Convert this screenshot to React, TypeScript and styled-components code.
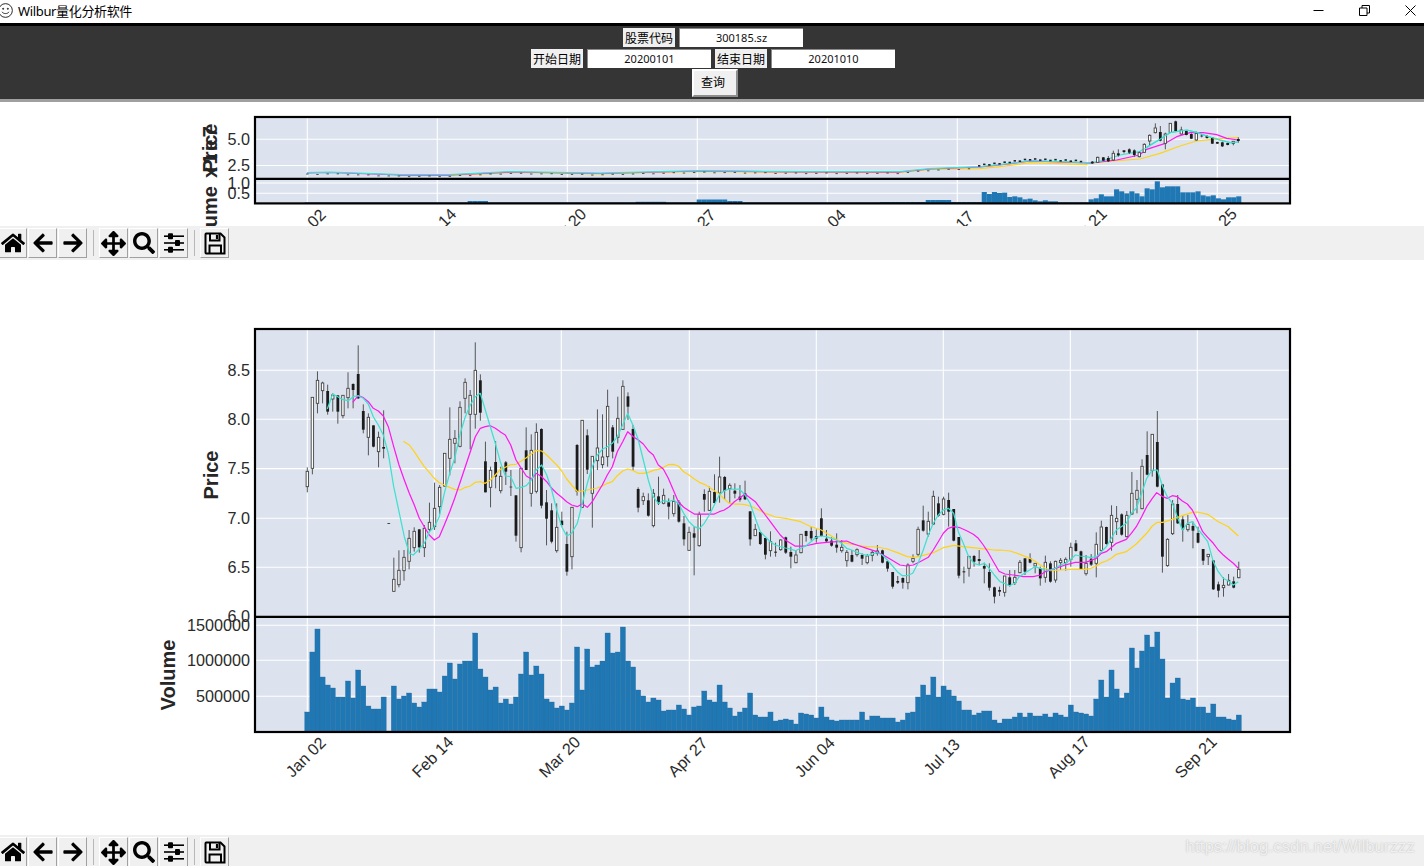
import React from "react";
import styled, { createGlobalStyle } from "styled-components";
import { FaHome, FaArrowLeft, FaArrowRight, FaArrowsAlt, FaSearch } from "react-icons/fa";

const GlobalStyle = createGlobalStyle`
  html, body { margin: 0; padding: 0; background: #fff; overflow: hidden; }
  #root { width: 1424px; height: 866px; }
`;

/* ---------- data, read off the reference ---------- */
type C = [number, number, number, number, number];
// wick top, body top, body bottom, wick bottom, filled — in 3x crop units
const A: C[] = [
[412,424,470,487,0],[202,202,415,433,0],[124,151,220,250,0],[155,159,182,220,0],[164,183,245,254,1],[190,195,207,245,0],[196,196,245,281,1],[196,196,257,265,0],[127,175,203,235,0],[160,162,180,235,1],[46,132,205,207,1],[223,243,299,310,1],[250,262,322,376,0],[286,286,350,352,1],[305,322,365,412,0],[241,351,356,385,1],[579,579,581,581,1],[683,748,784,785,0],[661,721,764,772,0],[660,682,722,752,0],[600,625,694,718,0],[592,604,653,665,0],[598,598,652,668,1],[585,595,653,681,0],[518,577,598,605,0],[458,535,590,600,0],[465,472,530,552,0],[370,370,468,470,0],[232,328,385,436,0],[300,325,340,400,0],[214,232,349,352,0],[145,157,205,250,0],[180,196,253,358,0],[37,121,253,296,0],[133,151,248,272,1],[335,394,487,487,1],[410,421,472,532,0],[333,396,440,475,1],[410,439,482,490,0],[393,397,425,465,1],
[420,470,472,498,1],[496,496,617,635,1],[415,415,653,667,0],[292,361,420,420,1],[313,361,490,530,0],[280,307,484,490,0],[295,297,527,535,1],[480,517,566,646,1],[520,541,635,640,1],[520,592,662,668,0],[545,572,585,590,1],[605,642,725,737,1],[532,532,680,718,0],[342,345,485,497,1],[271,271,532,534,0],[298,316,419,432,1],[379,379,490,593,0],[238,354,392,420,0],[253,381,404,415,0],[179,229,380,410,0],[285,292,365,385,1],[200,265,322,340,0],[151,169,298,300,0],[187,199,230,270,1],[285,297,410,422,1],[472,477,533,547,1],[488,500,512,525,0],[490,511,557,560,1],[477,490,587,592,0],[440,499,520,525,1],[476,496,520,523,0],[505,517,530,568,1],[495,514,551,560,0],[510,516,575,578,1],[558,580,628,647,1],[590,607,661,662,0],[590,610,623,736,1],[545,553,647,650,0],[478,492,509,545,1],[470,484,541,543,0],[433,486,519,520,1],[380,441,489,518,0],[438,441,483,510,1],[460,466,476,518,0],[460,482,491,505,1],[465,500,509,515,1],[452,490,508,510,1],[544,544,628,647,1],
];
const B: C[] = [
[372,388,407,408,0],[396,396,432,435,1],[414,414,464,478,1],[394,425,452,470,0],[428,455,458,470,1],[418,420,449,452,0],[410,412,458,462,1],[440,456,470,505,1],[450,465,488,490,0],[402,403,458,460,0],[392,393,408,425,1],[380,393,415,422,1],[388,408,416,428,1],[325,355,408,410,1],[390,416,424,428,1],[412,422,437,440,1],[400,434,443,458,1],[420,442,452,458,0],[450,457,482,500,0],[450,465,485,487,1],[445,449,464,470,0],[460,465,476,495,1],[462,468,488,493,0],[450,457,466,484,0],[435,453,460,467,0],[449,451,488,490,1],[482,484,506,515,1],[516,516,560,566,1],[528,543,548,552,1],[532,534,548,566,1],[490,495,548,568,0],[463,475,484,490,0],[380,388,463,470,0],[317,361,392,395,1],[335,364,402,410,0],[272,289,372,375,0],[290,310,347,350,1],[290,297,343,346,0],[278,300,335,380,1],[327,327,422,424,1],[411,411,527,535,1],[500,514,517,550,1],[468,469,505,530,0],[465,468,485,500,1],[450,477,483,496,1],[488,498,506,550,1],[490,516,563,572,1],[560,562,590,610,1],[560,570,575,588,1],[528,528,577,590,0],[510,532,555,560,1],
[510,532,548,555,0],[480,487,518,520,0],[475,475,515,525,1],[460,475,488,490,1],[490,490,498,520,0],[500,504,535,557,1],[467,487,532,548,0],[484,490,545,548,1],[482,484,540,548,0],[474,481,488,510,0],[472,478,488,512,0],[428,442,478,500,0],[420,430,453,455,1],[452,454,507,508,1],[465,490,521,527,0],[462,476,494,498,1],[397,433,490,532,0],[362,381,451,453,0],[380,381,432,434,1],[316,346,427,452,0],[318,355,365,405,0],[340,343,404,407,1],[333,346,410,412,0],[216,280,342,345,0],[240,271,298,340,0],[178,199,326,328,0],[94,165,224,226,1],[103,103,212,230,0],[33,126,260,262,1],[253,253,470,518,1],[415,418,497,500,0],[300,312,401,405,0],[285,312,370,372,1],[345,358,388,425,1],[345,373,389,395,0],[365,378,392,445,1],[380,399,428,430,1],[447,447,482,495,1],[462,463,470,495,0],[481,481,568,570,1],[545,553,572,592,1],[532,556,563,590,0],[522,541,555,556,0],[530,544,563,565,1],[485,508,533,535,0],
];
const candles = [
  ...A.map((c) => c.map((v, i) => (i < 4 ? 330 + v / 3 : v))),
  ...B.map((c) => c.map((v, i) => (i < 4 ? 400 + v / 3 : v))),
];
const xOf = (i: number) => 307.3 + 5.09 * i;

type P = [number, number][];
const pts = (off: [number, number], a: P) => a.map(([x, y]) => `${(off[0] + x / 3).toFixed(1)},${(off[1] + y / 3).toFixed(1)}`).join(" ");
const cyan = [
  pts([250, 330], [[232,237],[248,192],[263,200],[279,209],[295,212],[310,200],[325,197],[340,205],[355,222],[370,260],[385,285],[400,315],[415,370],[431,470],[447,545],[463,620],[478,670],[490,675],[505,660],[523,640],[538,605],[553,590],[568,560],[583,490],[599,430],[614,385],[631,310],[646,260],[661,225],[676,200],[691,190],[706,240],[721,290],[736,340],[751,395],[766,438]]),
  pts([500, 330], [[16,438],[32,440],[48,475],[64,472],[79,467],[94,450],[109,420],[125,405],[140,435],[155,480],[170,540],[185,590],[200,618],[215,610],[232,580],[247,520],[262,460],[277,410],[292,375],[307,358],[322,350],[337,340],[352,320],[368,285],[383,250],[400,288],[415,330],[430,390],[445,450],[460,500],[475,520],[490,512],[505,515],[520,510],[535,520],[551,550],[567,575],[583,590],[598,596],[613,580],[628,555],[643,525],[658,495],[673,482],[688,477],[703,478],[718,477],[735,495]]),
  pts([750, 400], [[0,310],[16,355],[31,395],[46,410],[61,425],[76,435],[91,440],[106,444],[121,447],[136,452],[152,445],[168,437],[183,425],[198,412],[214,408],[229,410],[244,415],[259,420],[274,430],[290,445],[305,450],[320,457],[336,462],[352,467],[367,462],[382,458],[397,465],[412,480],[427,497],[442,515],[457,527],[472,527],[488,520],[504,490],[520,450],[535,405],[550,370],[565,345],[580,330],[595,325],[611,340],[625,395],[640,430],[656,470],[672,490],[688,495],[703,490],[718,505],[733,525]]),
  pts([1000, 400], [[0,545],[13,550],[28,557],[44,550],[58,530],[73,520],[89,510],[104,500],[121,505],[136,510],[151,510],[166,505],[181,495],[196,490],[211,480],[226,465],[241,468],[257,470],[273,473],[289,470],[304,455],[319,440],[334,415],[349,390],[364,380],[379,370],[394,340],[409,325],[425,280],[440,235],[457,210],[472,210],[488,260],[502,290],[517,310],[532,350],[547,390],[562,370],[577,365],[592,385],[608,405],[623,425],[640,485],[655,515],[670,535],[685,543],[700,555],[715,545]]),
].join(" ");
const magenta = [
  pts([250, 330], [[308,217],[325,197],[340,203],[355,215],[370,235],[385,243],[400,258],[415,290],[431,350],[447,405],[463,450],[478,490],[493,525],[508,565],[523,590],[538,615],[553,630],[568,620],[583,585],[599,545],[614,505],[631,455],[646,410],[661,365],[676,320],[691,295],[706,290],[721,287],[736,295],[751,305]]),
  pts([500, 330], [[0,305],[16,315],[32,345],[48,390],[64,415],[79,438],[94,447],[109,430],[125,440],[140,455],[155,475],[170,490],[185,502],[200,515],[215,525],[232,530],[247,521],[262,532],[277,515],[292,490],[307,465],[322,435],[337,410],[352,365],[368,335],[383,305],[400,320],[415,330],[430,342],[445,362],[460,375],[475,405],[490,417],[505,445],[520,480],[535,515],[551,532],[567,542],[583,552],[598,552],[613,552],[628,552],[643,552],[658,545],[673,540],[688,530],[703,515],[718,505],[735,492]]),
  pts([750, 400], [[0,293],[16,305],[31,325],[46,345],[61,365],[76,385],[91,405],[106,420],[135,438],[165,438],[200,430],[230,427],[260,425],[290,423],[305,430],[320,435],[350,445],[380,455],[400,465],[425,480],[450,495],[470,498],[490,495],[510,485],[535,472],[550,450],[565,425],[580,400],[595,385],[610,380],[630,383],[650,392],[670,403],[685,415],[700,435],[715,458],[733,490],[748,515]]),
  pts([1000, 400], [[0,515],[15,522],[40,525],[70,530],[100,530],[121,525],[136,515],[166,505],[196,495],[226,487],[257,487],[289,475],[304,460],[319,455],[349,430],[379,418],[394,400],[409,380],[425,350],[440,320],[457,295],[470,278],[488,290],[502,295],[517,287],[532,290],[547,303],[562,312],[577,330],[592,360],[608,395],[623,412],[640,430],[655,450],[670,465],[685,478],[700,490],[715,505]]),
].join(" ");
const gold = [
  pts([250, 330], [[460,334],[478,345],[493,365],[508,388],[523,410],[538,427],[553,445],[568,458],[583,465],[599,472],[614,478],[631,480],[646,472],[661,468],[676,457],[691,455],[706,460],[721,450],[736,435],[751,418]]),
  pts([500, 330], [[16,412],[32,404],[48,403],[64,393],[79,383],[94,372],[109,361],[125,363],[140,375],[155,390],[170,405],[185,423],[200,447],[215,465],[232,484],[247,483],[262,480],[277,477],[292,474],[307,468],[322,460],[337,455],[352,437],[368,423],[383,417],[400,422],[415,430],[430,430],[445,427],[460,421],[475,418],[490,412],[505,404],[520,403],[535,408],[551,425],[567,435],[583,447],[598,457],[613,463],[628,472],[643,482],[658,492],[673,508],[688,520],[703,522],[718,522],[735,524]]),
  pts([750, 400], [[0,318],[16,325],[31,332],[46,340],[61,345],[76,351],[106,355],[121,358],[152,365],[183,380],[214,390],[244,408],[259,418],[274,425],[290,430],[320,435],[336,438],[352,440],[382,441],[412,447],[442,458],[472,470],[488,472],[504,470],[520,466],[550,458],[580,443],[611,436],[640,440],[688,445],[733,450]]),
  pts([1000, 400], [[0,450],[30,453],[60,463],[89,475],[104,483],[121,495],[136,505],[151,512],[181,510],[211,508],[241,508],[257,508],[273,505],[289,498],[304,488],[319,483],[334,475],[349,463],[379,455],[409,432],[440,400],[457,378],[472,367],[488,367],[517,358],[547,347],[577,337],[592,336],[623,343],[655,365],[685,380],[715,408]]),
].join(" ");

// volume bar tops in 3x crop units, y offset 610
const vols = [306,126,57,201,225,234,261,261,213,264,180,228,288,297,297,261,363,228,267,258,249,279,291,276,237,237,246,198,159,207,162,153,153,69,177,201,240,231,279,267,282,261,192,126,195,168,192,267,276,294,288,300,279,111,240,117,171,165,153,69,129,126,51,153,171,240,258,276,264,270,303,300,300,285,297,315,291,288,243,
270,276,225,276,294,318,306,294,249,315,321,321,306,333,330,327,330,342,309,312,315,324,291,321,330,333,330,330,330,330,306,330,318,318,324,324,324,336,330,309,306,261,225,255,201,261,228,240,258,273,300,300,315,309,303,303,330,339,327,327,321,309,321,309,318,318,312,321,309,315,321,285,306,309,312,318,267,210,261,180,237,264,249,114,174,123,75,111,66,147,264,219,204,267,270,264,291,291,309,282,321,321,327,330,315];

// small chart: last stretch, x/y in 3x crop units from (1000,0)
const smallCandles: number[][] = [[277,485,490,1,483,492],[293,472,487,0,470,488],[310,472,482,1,471,483],[325,474,484,1,468,486],[340,460,480,0,452,482],[355,460,466,1,448,470],[372,451,456,1,450,460],[388,448,458,1,445,462],[403,451,465,1,448,470],[418,458,470,0,455,472],[433,433,457,0,430,458],[449,406,423,0,403,436],[466,384,398,0,370,400],[481,396,422,1,378,424],[496,402,430,0,398,448],[511,370,397,0,369,398],[527,364,393,1,362,395],[544,390,402,0,380,403],[559,393,405,1,392,406],[574,402,416,1,400,417],[589,400,420,0,395,422],[605,407,409,1,402,412],[621,408,414,1,405,416],[637,413,431,1,412,432],[652,426,431,1,425,432],[667,427,439,1,425,441],[683,429,435,1,428,436],[700,424,430,0,423,436],[715,417,423,1,412,428]];
const curve: P = [[307,173],[330,172.5],[400,175],[450,175],[510,172],[600,173.5],[700,171],[800,172],[900,172],[930,169],[980,167],[1000,165],[1030,161],[1060,162],[1087,163]];
const curveY = (x: number) => {
  for (let i = 1; i < curve.length; i++) {
    if (x <= curve[i][0]) {
      const [x0, y0] = curve[i - 1];
      const [x1, y1] = curve[i];
      return y0 + ((y1 - y0) * (x - x0)) / (x1 - x0);
    }
  }
  return 163;
};
const smallVol = (i: number) => {
  const x = xOf(i);
  if (x > 470 && x < 490) return 2;
  if (x > 635 && x < 665) return 1.2;
  if (x > 695 && x < 745) return x < 725 ? 3.5 : 2;
  if (x > 880 && x < 925) return 1;
  if (x > 925 && x < 950) return 3;
  if (x > 950 && x < 982) return 1;
  if (x >= 982 && x < 1002) return 9 + (i % 2) * 2;
  return 0.5;
};
const smallVolTail = [10,31/3,18/3,20/3,17/3,11/3,13/3,8/3,5/3,8/3,5/3,5/3,2/3,2/3,2/3,2/3,2/3,2/3,11/3,14/3,26/3,20/3,20/3,41/3,35/3,29/3,35/3,29/3,20/3,44/3,41/3,65/3,47/3,50/3,50/3,50/3,32/3,32/3,32/3,35/3,23/3,20/3,23/3,14/3,11/3,17/3,17/3,20/3];

const smallCyan = pts([0, 0], curve.map(([x, y]) => [x * 3, y * 3 - 1] as [number, number])) + " " + pts([1000, 0], [[262,490],[310,482],[360,465],[418,455],[450,435],[480,418],[510,398],[560,390],[590,397],[620,408],[660,420],[690,428],[715,426]]);
const smallMagenta = pts([0, 0], curve.map(([x, y]) => [x * 3, y * 3] as [number, number])) + " " + pts([1000, 0], [[262,490],[350,480],[418,465],[440,448],[496,430],[530,410],[570,398],[610,398],[650,404],[680,415],[715,420]]);
const smallGold = pts([0, 0], curve.slice(3).map(([x, y]) => [x * 3, y * 3 + (x > 950 ? 5 : 1.5)] as [number, number])) + " " + pts([1000, 0], [[262,490],[340,483],[420,477],[480,460],[540,438],[590,423],[640,418],[680,414],[715,413]]);

/* ---------- styled parts ---------- */
const Window = styled.div`
  width: 1424px;
  height: 866px;
  display: flex;
  flex-direction: column;
  position: relative;
  overflow: hidden;
  background: #fff;
  font-family: "Noto Sans", "Noto Sans CJK SC", sans-serif;
`;
const TitleBar = styled.header`
  height: 23px;
  box-sizing: border-box;
  flex: none;
  display: flex;
  align-items: center;
  padding: 0 8px 2px 0;
  background: #fff;
`;
const AppIcon = styled.svg`
  width: 15px;
  height: 15px;
  margin: 0 5px 0 -2px;
  flex: none;
`;
const TitleText = styled.span`
  flex: 1;
  font: 13px "Noto Sans", "Noto Sans CJK SC", sans-serif;
  color: #000;
  letter-spacing: -0.35px;
`;
const WinControls = styled.div`
  display: flex;
  gap: 35px;
  align-items: center;
`;
const WinIcon = styled.svg`
  width: 11px;
  height: 11px;
  display: block;
`;
const Panel = styled.section`
  height: 79px;
  box-sizing: border-box;
  flex: none;
  background: #353535;
  border-top: 3px solid #000;
  border-bottom: 3px solid #a0a0a0;
  padding: 2px 0 0 2px;
  display: flex;
  flex-direction: column;
  align-items: center;
`;
const FormRow = styled.div`
  display: flex;
  gap: 4px;
  height: 19px;
  margin-bottom: 2px;
`;
const FieldLabel = styled.span`
  width: 52px;
  height: 19px;
  background: #f0f0f0;
  color: #000;
  font: 12px/19px "Noto Sans CJK SC", sans-serif;
  text-align: center;
`;
const Field = styled.span`
  width: 124px;
  height: 19px;
  box-sizing: border-box;
  background: #fff;
  border-top: 1px solid #8a8a8a;
  border-left: 1px solid #8a8a8a;
  color: #111;
  font: 11px/17px "Noto Sans", sans-serif;
  text-align: center;
`;
const QueryButton = styled.button`
  width: 46px;
  height: 28px;
  box-sizing: border-box;
  margin: -1px 0 0 4px;
  padding: 0 4px 3px 0;
  background: #f0f0f0;
  color: #000;
  font: 12px "Noto Sans CJK SC", sans-serif;
  border: 2px solid;
  border-color: #ffffff #8e8e8e #8e8e8e #ffffff;
`;
const PlotArea = styled.div<{ $h: number }>`
  height: ${(p) => p.$h}px;
  flex: none;
  background: #fff;
  overflow: hidden;
`;
const PlotSvg = styled.svg`
  display: block;
  width: 1424px;
  height: 100%;
`;
const AxisLabel = styled.text`
  font: 16.2px "Liberation Sans", Arial, sans-serif;
  fill: #2b2b2b;
`;
const AxisTitle = styled.text`
  font: bold 20px "Liberation Sans", Arial, sans-serif;
  fill: #262626;
`;
const Toolbar = styled.nav<{ $h: number }>`
  height: ${(p) => p.$h}px;
  flex: none;
  box-sizing: border-box;
  background: #f0f0f0;
  padding: 2px 0 0 0;
  display: flex;
  align-items: flex-start;
  overflow: hidden;
`;
const ToolButton = styled.button`
  width: 29px;
  height: 30px;
  flex: none;
  box-sizing: border-box;
  padding: 0;
  margin: 0 1px 0 0;
  background: #f0f0f0;
  border: 1.5px solid;
  border-color: #ffffff #a0a0a0 #a0a0a0 #ffffff;
  color: #000;
  display: flex;
  align-items: center;
  justify-content: center;
  &:first-child {
    margin-left: -2px;
  }
`;
const ToolSep = styled.i`
  width: 1px;
  height: 26px;
  margin: 2px 5px 0 5px;
  background: #b8b8b8;
  flex: none;
`;
const Watermark = styled.span`
  position: absolute;
  right: 9px;
  bottom: 9px;
  font: 16.7px "Liberation Sans", Arial, sans-serif;
  color: rgba(255, 255, 255, 0.75);
  text-shadow: 0 0 1.5px rgba(120, 120, 120, 0.55);
  letter-spacing: 0.1px;
`;

/* ---------- parts ---------- */
const BG = "#dde3ee";
const FRAME = "#000";
const Candle: React.FC<{ x: number; wt: number; bt: number; bb: number; wb: number; f: number }> = ({ x, wt, bt, bb, wb, f }) => (
  <g>
    <line x1={x} x2={x} y1={wt} y2={wb} stroke="#454545" strokeWidth={0.9} />
    {f ? (
      <rect x={x - 1.4} y={bt} width={2.8} height={Math.max(bb - bt, 0.7)} fill="#1c1c1c" />
    ) : (
      <rect x={x - 1.2} y={bt} width={2.4} height={bb - bt} fill="#fff" stroke="#444" strokeWidth={0.9} />
    )}
  </g>
);

const Ma: React.FC<{ points: string; color: string }> = ({ points, color }) => (
  <polyline points={points} fill="none" stroke={color} strokeWidth={1.25} strokeLinejoin="round" />
);

const SlidersIcon: React.FC = () => (
  <svg width="22" height="22" viewBox="0 0 22 22" fill="#000">
    <rect x="1" y="3.4" width="20" height="1.6" />
    <rect x="1" y="10.2" width="20" height="1.6" />
    <rect x="1" y="17" width="20" height="1.6" />
    <rect x="5" y="1.2" width="5" height="6" rx="1" />
    <rect x="12" y="8" width="5" height="6" rx="1" />
    <rect x="5" y="14.8" width="5" height="6" rx="1" />
  </svg>
);

const FloppyIcon: React.FC = () => (
  <svg width="22" height="23" viewBox="0 0 22 23" fill="none" stroke="#000" strokeWidth="2">
    <path d="M2 1.5h14.5l4 4v16H2a1 1 0 0 1 -0.5 -1V2.5a1 1 0 0 1 .5 -1z" />
    <path d="M6 1.5v7h9.5v-7" />
    <path d="M13 3v4" strokeWidth="2.2" />
    <path d="M5.5 21.5v-8h11.5v8" />
  </svg>
);

const Tools: React.FC = () => (
  <>
    <ToolButton><FaHome size={24} /></ToolButton>
    <ToolButton><FaArrowLeft size={22} /></ToolButton>
    <ToolButton><FaArrowRight size={22} /></ToolButton>
    <ToolSep />
    <ToolButton><FaArrowsAlt size={25} /></ToolButton>
    <ToolButton><FaSearch size={22} /></ToolButton>
    <ToolButton><SlidersIcon /></ToolButton>
    <ToolSep />
    <ToolButton><FloppyIcon /></ToolButton>
  </>
);

const MainChart: React.FC = () => {
  const vx = [307.3, 434.3, 561.3, 689.3, 816.3, 943.3, 1070.3, 1197.3];
  const labels = ["Jan 02", "Feb 14", "Mar 20", "Apr 27", "Jun 04", "Jul 13", "Aug 17", "Sep 21"];
  const py: [number, string][] = [[370.3, "8.5"], [419.3, "8.0"], [468.6, "7.5"], [518.3, "7.0"], [567.3, "6.5"]];
  const vy: [number, string][] = [[625.3, "1500000"], [660.3, "1000000"], [696.3, "500000"]];
  return (
    <PlotSvg viewBox="0 260 1424 575">
      <rect x={255} y={329} width={1035} height={403} fill={BG} />
      {vx.map((x) => <line key={x} x1={x} x2={x} y1={329} y2={732} stroke="#fff" strokeWidth={1.1} />)}
      {[...py, ...vy].map(([y]) => <line key={y} x1={255} x2={1290} y1={y} y2={y} stroke="#fff" strokeWidth={1.1} />)}
      {vols.map((t, i) => {
        const top = 610 + t / 3;
        return <rect key={i} x={xOf(i) - 2.55} y={top} width={5.09} height={Math.max(731.5 - top, 0)} fill="#1f77b4" stroke="#2a6c9e" strokeWidth={0.35} />;
      })}
      {candles.map((c, i) => <Candle key={i} x={xOf(i)} wt={c[0]} bt={c[1]} bb={c[2]} wb={c[3]} f={c[4]} />)}
      <Ma points={gold} color="#ffd21a" />
      <Ma points={magenta} color="#ff19f0" />
      <Ma points={cyan} color="#3fe0d0" />
      <rect x={255} y={329} width={1035} height={403} fill="none" stroke={FRAME} strokeWidth={2.2} />
      <line x1={255} x2={1290} y1={616.8} y2={616.8} stroke={FRAME} strokeWidth={2.2} />
      {py.map(([y, t]) => <AxisLabel key={t} x={250} y={y + 5.5} textAnchor="end">{t}</AxisLabel>)}
      <AxisLabel x={250} y={622} textAnchor="end">6.0</AxisLabel>
      {vy.map(([y, t]) => <AxisLabel key={t} x={250} y={y + 5.5} textAnchor="end">{t}</AxisLabel>)}
      <AxisTitle transform="translate(217.5,475) rotate(-90)" textAnchor="middle">Price</AxisTitle>
      <AxisTitle transform="translate(175,675) rotate(-90)" textAnchor="middle">Volume</AxisTitle>
      {vx.map((x, i) => (
        <AxisLabel key={x} transform={`translate(${x - 0.7},758) rotate(-45)`} textAnchor="middle" dominantBaseline="middle">{labels[i]}</AxisLabel>
      ))}
    </PlotSvg>
  );
};

const SmallChart: React.FC = () => {
  const vx = [307.3, 437.3, 567.3, 697.3, 827.3, 957.3, 1087.3, 1217.3];
  const labels = ["Jan 02", "Feb 14", "Mar 20", "Apr 27", "Jun 04", "Jul 17", "Aug 21", "Sep 25"];
  const count = Math.floor((1087 - 307.3) / 5.09);
  return (
    <PlotSvg viewBox="0 102 1424 124">
      <rect x={255} y={117} width={1035} height={87} fill={BG} />
      {vx.map((x) => <line key={x} x1={x} x2={x} y1={117} y2={204} stroke="#fff" strokeWidth={1.1} />)}
      {[139.3, 165.5, 183, 193.3].map((y) => <line key={y} x1={255} x2={1290} y1={y} y2={y} stroke="#fff" strokeWidth={1.1} />)}
      {Array.from({ length: 184 }, (_, i) => {
        const h = i >= 136 ? smallVolTail[i - 136] ?? 0 : smallVol(i);
        return <rect key={i} x={xOf(i) - 2.55} y={203 - h} width={5.09} height={h} fill="#1f77b4" />;
      })}
      <Ma points={smallGold} color="#ffd21a" />
      <Ma points={smallMagenta} color="#ff19f0" />
      <Ma points={smallCyan} color="#3fe0d0" />
      {Array.from({ length: count }, (_, i) => {
        const x = xOf(i);
        const up = x > 975;
        const y = curveY(x) + (up ? -2 - (i % 2) : 0.6 + (i % 3) * 0.3);
        return i % 2 === 0 || up ? <rect key={i} x={x - 1.2} y={y} width={2.4} height={up ? 1.6 : 0.9} fill={up ? "#222" : "#444"} /> : null;
      })}
      {smallCandles.map((c, i) => {
        const x = 1000 + c[0] / 3;
        return <Candle key={i} x={x} wt={c[4] / 3} bt={c[1] / 3} bb={c[2] / 3} wb={c[5] / 3} f={c[3]} />;
      })}
      <Ma points={pts([1000, 0], [[433,448],[480,418],[510,398],[560,390],[590,397],[620,408],[660,420],[690,428],[715,426]])} color="#3fe0d0" />
      <rect x={255} y={117} width={1035} height={86.4} fill="none" stroke={FRAME} strokeWidth={2.2} />
      <line x1={255} x2={1290} y1={178.8} y2={178.8} stroke={FRAME} strokeWidth={2.2} />
      {([[139.3, "5.0"], [165.3, "2.5"], [183, "1.0"], [193.3, "0.5"]] as [number, string][]).map(([y, t]) => (
        <AxisLabel key={t} x={250} y={y + 5.5} textAnchor="end">{t}</AxisLabel>
      ))}
      <AxisTitle transform="translate(216.5,148) rotate(-90)" textAnchor="middle">Price</AxisTitle>
      <AxisTitle transform="translate(216.5,186) rotate(-90)" textAnchor="end">Volume</AxisTitle>
      <AxisTitle transform="translate(216.5,178) rotate(-90)" letterSpacing={2.5}>x1e7</AxisTitle>
      {vx.map((x, i) => (
        <AxisLabel key={x} transform={`translate(${x - 0.7},230) rotate(-45)`} textAnchor="middle" dominantBaseline="middle">{labels[i]}</AxisLabel>
      ))}
    </PlotSvg>
  );
};

export default function App() {
  return (
    <Window>
      <GlobalStyle />
      <TitleBar>
        <AppIcon viewBox="0 0 14 14" fill="none" stroke="#222" strokeWidth={0.9}>
          <circle cx="7" cy="7" r="6.4" />
          <circle cx="4.8" cy="5.4" r="0.5" fill="#222" />
          <circle cx="9.2" cy="5.4" r="0.5" fill="#222" />
          <path d="M3.8 8.2c.8 2.2 5.6 2.2 6.4 0" />
        </AppIcon>
        <TitleText>Wilbur量化分析软件</TitleText>
        <WinControls>
          <WinIcon viewBox="0 0 11 11"><path d="M0.5 5.5h10" stroke="#000" strokeWidth="1" /></WinIcon>
          <WinIcon viewBox="0 0 11 11" fill="none" stroke="#000"><path d="M0.5 3h7.5v7.5H0.5zM3 3V0.5h7.5V8H8" /></WinIcon>
          <WinIcon viewBox="0 0 11 11"><path d="M0.5 0.5l10 10M10.5 0.5l-10 10" stroke="#000" strokeWidth="1" /></WinIcon>
        </WinControls>
      </TitleBar>
      <Panel>
        <FormRow>
          <FieldLabel>股票代码</FieldLabel>
          <Field>300185.sz</Field>
        </FormRow>
        <FormRow>
          <FieldLabel>开始日期</FieldLabel>
          <Field>20200101</Field>
          <FieldLabel>结束日期</FieldLabel>
          <Field>20201010</Field>
        </FormRow>
        <QueryButton>查询</QueryButton>
      </Panel>
      <PlotArea $h={124}><SmallChart /></PlotArea>
      <Toolbar $h={34}><Tools /></Toolbar>
      <PlotArea $h={575}><MainChart /></PlotArea>
      <Toolbar $h={31}><Tools /></Toolbar>
      <Watermark>https://blog.csdn.net/Wilburzzz</Watermark>
    </Window>
  );
}
